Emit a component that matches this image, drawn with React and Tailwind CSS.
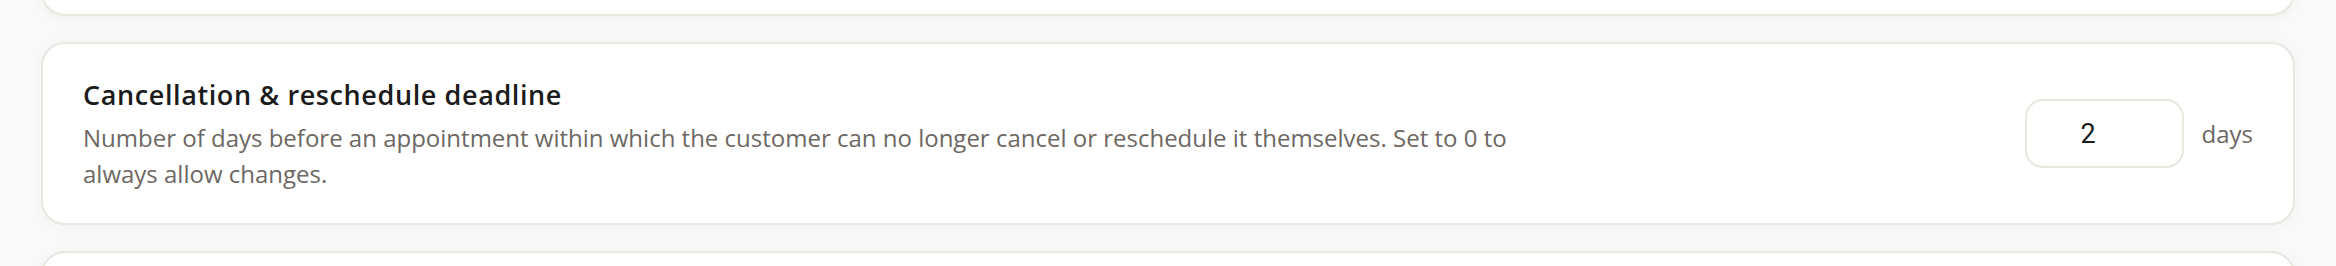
import React, { useState } from "react";

const font = { fontFamily: "'Open Sans', 'Noto Sans', sans-serif" };

const DeadlineSetting = () => {
  const [days, setDays] = useState("2");

  return (
    <div className="flex items-center justify-between gap-[40px] rounded-[24px] border-2 border-[#ebe6df] bg-white py-[31px] pl-[40px] pr-[40px] shadow-[0_2px_14px_rgba(0,0,0,0.035)]">
      <div className="min-w-0 max-w-[1440px] flex-1">
        <h3 className="text-[27px] font-semibold leading-[40px] tracking-[0.6px] text-[#1b1b1b]">
          Cancellation &amp; reschedule deadline
        </h3>
        <p className="mt-[5px] text-[24px] leading-[36px] text-[#6d6863]">
          Number of days before an appointment within which the customer can no
          longer cancel or reschedule it themselves. Set to 0 to always allow
          changes.
        </p>
      </div>
      <div className="flex shrink-0 items-center gap-[18px]">
        <input
          type="text"
          inputMode="numeric"
          value={days}
          onChange={(e) => setDays(e.target.value)}
          className="h-[69px] w-[159px] rounded-[18px] border-2 border-[#ebe6df] bg-white pl-0 pr-[32px] text-center text-[27px] text-[#1b1b1b] outline-none"
          style={{ fontFamily: "Roboto, sans-serif" }}
        />
        <span className="text-[24px] text-[#6d6863]">days</span>
      </div>
    </div>
  );
};

export default function App() {
  return (
    <div
      className="flex h-[266px] flex-col gap-[26px] overflow-hidden bg-[#f9f9f9] px-[41px]"
      style={font}
    >
      <div className="-mt-[44px] h-[60px] shrink-0 rounded-[24px] border-2 border-[#ebe6df] bg-white shadow-[0_2px_14px_rgba(0,0,0,0.035)]" />
      <div className="shrink-0">
        <DeadlineSetting />
      </div>
      <div className="h-[60px] shrink-0 rounded-[24px] border-2 border-[#ebe6df] bg-white shadow-[0_2px_14px_rgba(0,0,0,0.035)]" />
    </div>
  );
}
